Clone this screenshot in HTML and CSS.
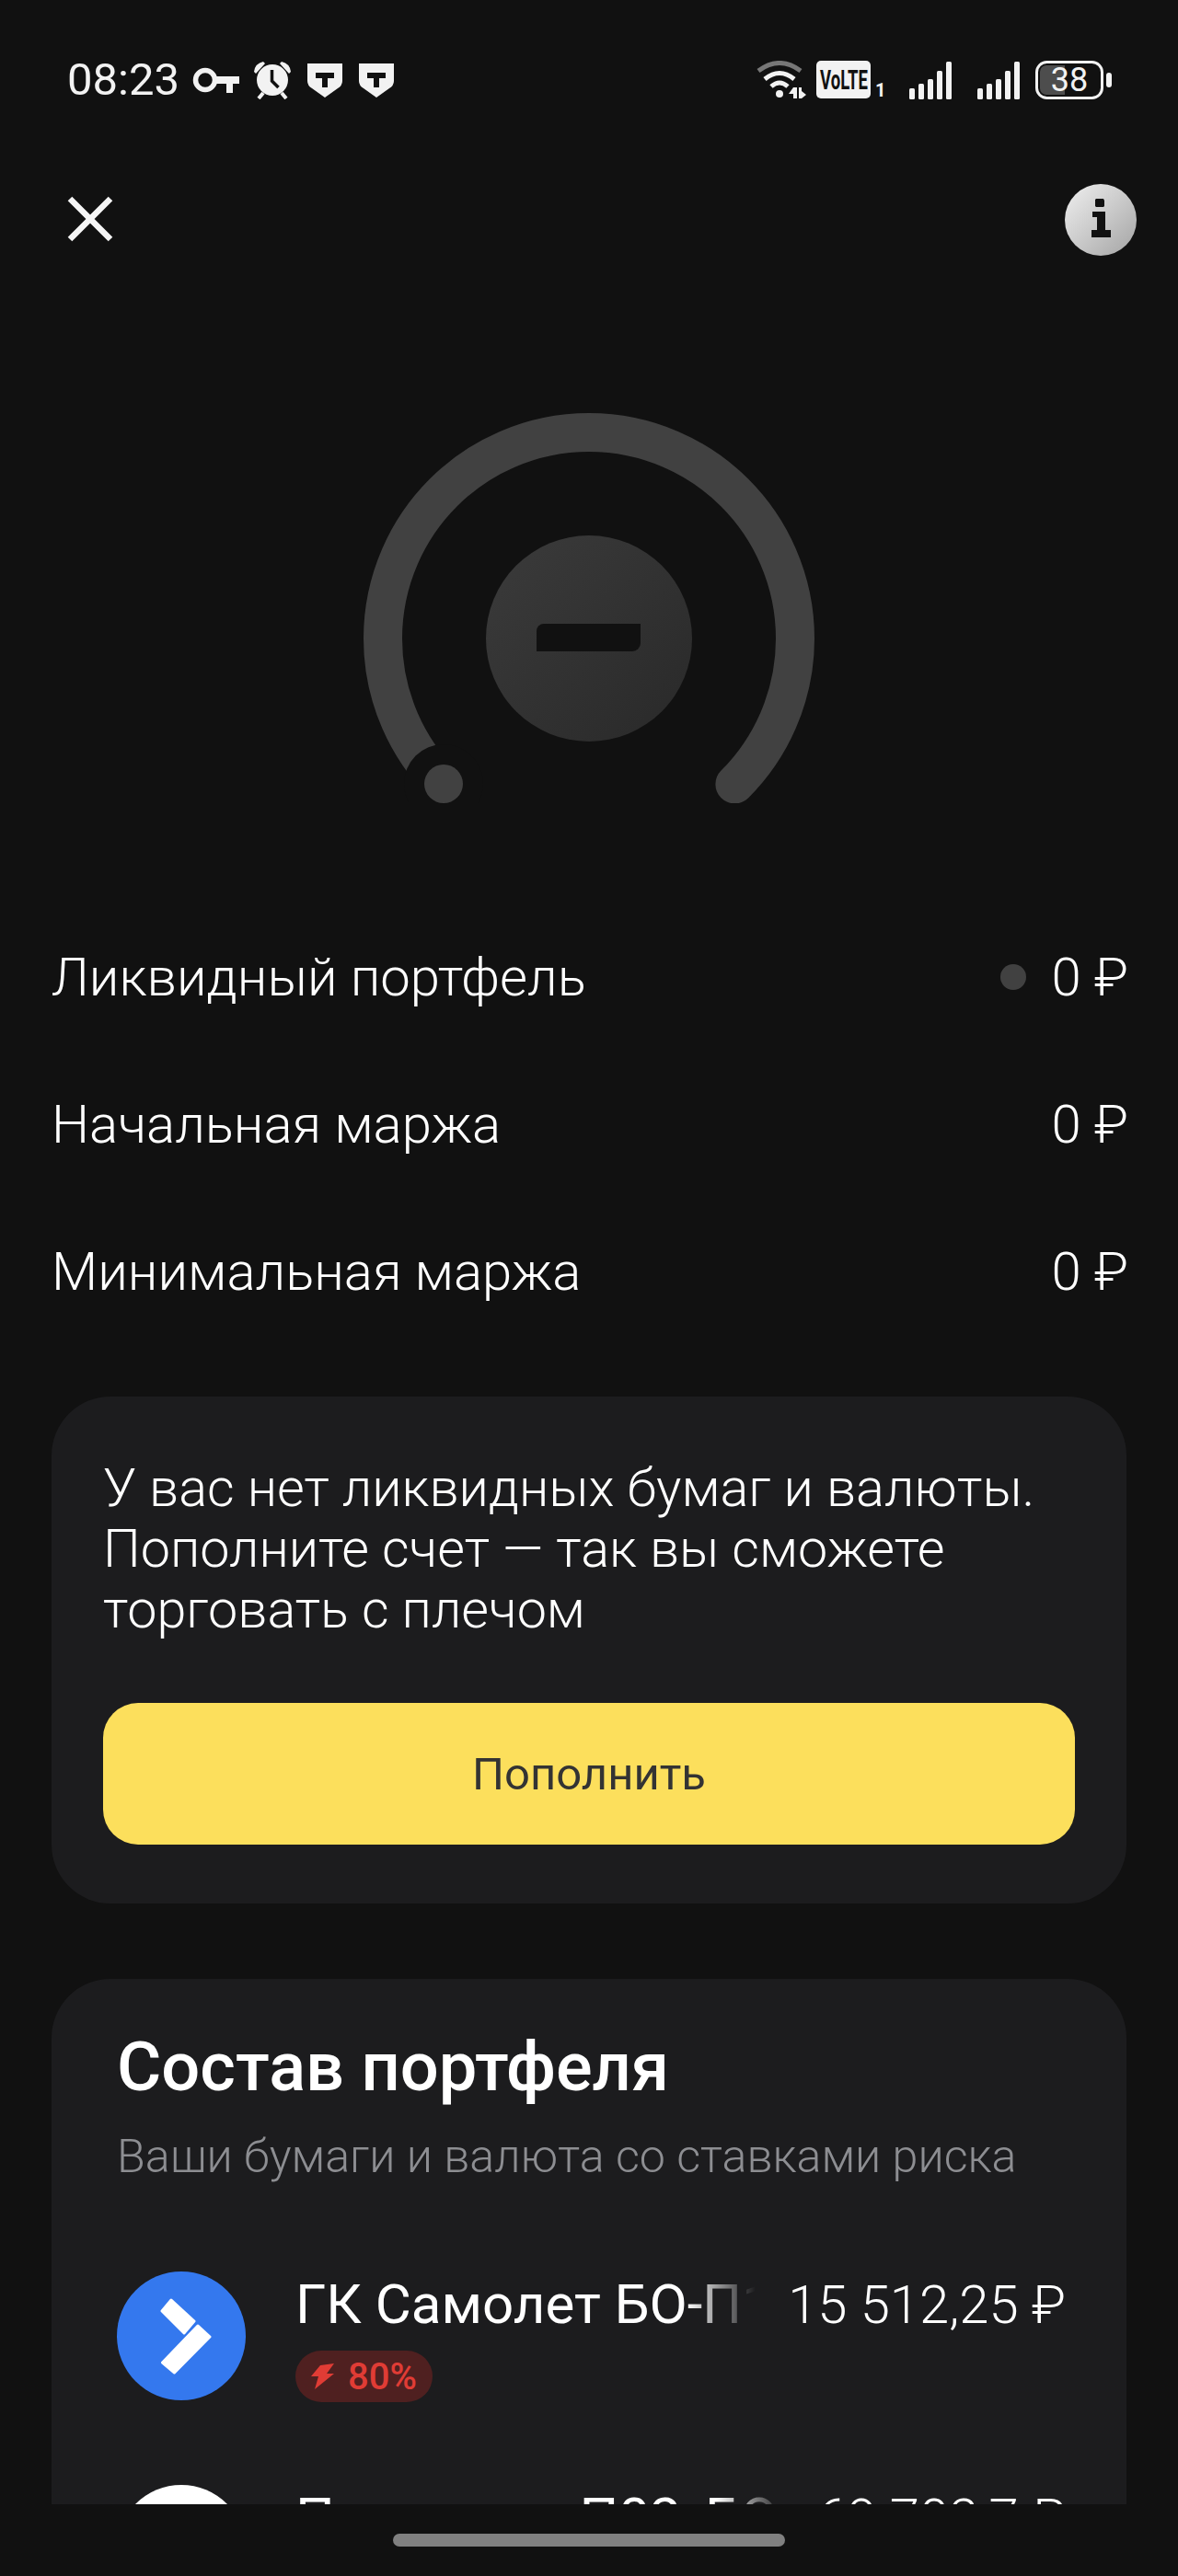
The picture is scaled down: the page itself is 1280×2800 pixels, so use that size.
FILE: index.html
```html
<!DOCTYPE html>
<html lang="ru">
<head>
    <meta charset="UTF-8">
    <meta name="viewport" content="width=device-width, initial-scale=1.0">
    <title>Маржинальная торговля</title>
    <link rel="stylesheet" href="styles.css">
</head>
<body>
    <div class="screen">
        <div class="content">
            <!-- Status bar -->
            <div class="status">
                <div class="status-left">
                    <span class="time">08:23</span>
                    <svg class="ic-key" width="52" height="28" viewBox="0 0 52 28"><circle cx="14" cy="14" r="10.5" fill="none" stroke="#f2f2f2" stroke-width="5.5"/><path d="M24 10h27v8H44v10h-7V18H24z" fill="#f2f2f2"/></svg>
                    <svg class="ic-alarm" width="42" height="42" viewBox="0 0 42 42"><circle cx="21" cy="21" r="17" fill="#f2f2f2"/><path d="M20.500 10v12l7 7" fill="none" stroke="#111" stroke-width="3.500"/><path d="M1 12Q2 3 11 1L13 3 3 14zM41 12Q40 3 31 1L29 3 39 14z" fill="#f2f2f2"/><path d="M6 41l5-6M36 41l-5-6" stroke="#f2f2f2" stroke-width="4"/></svg>
                    <svg class="ic-shield" width="38" height="38" viewBox="0 0 38 38"><path d="M0 1h38v19q0 5-5 8L19 38 5 28q-5-3-5-8z" fill="#f2f2f2"/><path d="M9 11h20v6h-7v10h-6V17H9z" fill="#111"/></svg>
                    <svg class="ic-shield" width="38" height="38" viewBox="0 0 38 38"><path d="M0 1h38v19q0 5-5 8L19 38 5 28q-5-3-5-8z" fill="#f2f2f2"/><path d="M9 11h20v6h-7v10h-6V17H9z" fill="#111"/></svg>
                </div>
                <div class="status-right">
                    <svg class="ic-wifi" width="54" height="42" viewBox="0 0 54 42"><path d="M2 11Q25-6 48 11" fill="none" stroke="#777" stroke-width="5"/><path d="M9 20Q25 7 41 20M16 28Q25 20 34 28" fill="none" stroke="#f2f2f2" stroke-width="5"/><circle cx="25" cy="36" r="4" fill="#f2f2f2"/><path d="M40 29v12h4V29zM40 29l-5 7h5zM46 29v12h3V29zM49 33l5 4-5 4z" fill="#f2f2f2"/></svg>
                    <svg class="ic-volte" width="76" height="42" viewBox="0 0 76 42"><rect x="0" y="0" width="59" height="41" rx="5" fill="#f2f2f2"/><text x="4" y="31" font-family="Roboto, sans-serif" font-weight="700" font-size="30" fill="#111" textLength="52" lengthAdjust="spacingAndGlyphs">VoLTE</text><text x="64" y="39" font-family="Roboto, sans-serif" font-weight="700" font-size="20" fill="#f2f2f2">1</text></svg>
                    <svg class="ic-signal" width="47" height="42" viewBox="0 0 47 42"><rect x="0" y="30" width="6" height="12" rx="1.500" fill="#f2f2f2"/><rect x="10" y="25" width="6" height="17" rx="1.500" fill="#f2f2f2"/><rect x="20" y="20" width="6" height="22" rx="1.500" fill="#f2f2f2"/><rect x="30" y="11" width="6" height="31" rx="1.500" fill="#f2f2f2"/><rect x="40" y="1" width="6" height="41" rx="1.500" fill="#f2f2f2"/></svg>
                    <svg class="ic-signal" width="47" height="42" viewBox="0 0 47 42"><rect x="0" y="30" width="6" height="12" rx="1.500" fill="#f2f2f2"/><rect x="10" y="25" width="6" height="17" rx="1.500" fill="#f2f2f2"/><rect x="20" y="20" width="6" height="22" rx="1.500" fill="#f2f2f2"/><rect x="30" y="11" width="6" height="31" rx="1.500" fill="#f2f2f2"/><rect x="40" y="1" width="6" height="41" rx="1.500" fill="#f2f2f2"/></svg>
                    <svg class="ic-battery" width="84" height="42" viewBox="0 0 84 42"><path d="M12 5h20v32H12a7 7 0 0 1-7-7V12a7 7 0 0 1 7-7z" fill="#4d4d4d"/><rect x="1.500" y="1.500" width="71" height="39" rx="11" fill="none" stroke="#f2f2f2" stroke-width="3"/><rect x="77" y="13" width="6" height="16" rx="3" fill="#f2f2f2"/><text x="37" y="33" text-anchor="middle" font-family="Roboto, sans-serif" font-size="36" fill="#f2f2f2">38</text></svg>
                </div>
            </div>

            <!-- Close and info buttons -->
            <div class="topbar">
                <svg width="50" height="50" viewBox="0 0 50 50"><path d="M3 3l44 44M47 3L3 47" stroke="#f5f5f5" stroke-width="6.500"/></svg>
                <svg width="78" height="78" viewBox="0 0 78 78">
                    <defs><linearGradient id="infoFill" x1="0" y1="0" x2="1" y2="1"><stop offset="0" stop-color="#f0f0f0"/><stop offset="1" stop-color="#a4a4a4"/></linearGradient></defs>
                    <circle cx="39" cy="39" r="39" fill="url(#infoFill)"/>
                    <path d="M34 16h8l1 2v6l-1 1h-8l-1-1v-7zM30 30h14v20h6v8H29v-8h6V36h-5z" fill="#111"/>
                </svg>
            </div>

            <!-- Gauge -->
            <svg class="gauge" width="490" height="424" viewBox="0 0 490 424">
                <defs><linearGradient id="coreFill" x1="0" y1="0" x2="1" y2="1"><stop offset="0" stop-color="#3b3b3b"/><stop offset="1" stop-color="#292929"/></linearGradient></defs>
                <path d="M86.600 403.400A224 224 0 1 1 403.400 403.400" fill="none" stroke="#414141" stroke-width="42" stroke-linecap="round"/>
                <circle cx="87" cy="403" r="43" fill="#111"/>
                <circle cx="87" cy="403" r="21" fill="#414141"/>
                <circle cx="245" cy="245" r="112" fill="url(#coreFill)"/>
                <path d="M196 229h105a8 8 0 0 1 0 0v21a9 9 0 0 1-9 9H188V237a8 8 0 0 1 8-8z" fill="#111"/>
            </svg>

            <!-- Margin figures -->
            <div class="rows">
                <div class="row">
                    <span>Ликвидный портфель</span>
                    <span class="row-value"><i class="dot"></i>0 ₽</span>
                </div>
                <div class="row">
                    <span>Начальная маржа</span>
                    <span class="row-value">0 ₽</span>
                </div>
                <div class="row">
                    <span>Минимальная маржа</span>
                    <span class="row-value">0 ₽</span>
                </div>
            </div>

            <div class="card notice">
                <p class="notice-text">У вас нет ликвидных бумаг и валюты. Пополните счет — так вы сможете торговать с плечом</p>
                <button class="button">Пополнить</button>
            </div>

            <div class="card portfolio">
                <h2>Состав портфеля</h2>
                <p class="sub">Ваши бумаги и валюта со ставками риска</p>

                <div class="item">
                    <svg class="logo" width="140" height="140" viewBox="0 0 140 140">
                        <circle cx="70" cy="70" r="70" fill="#3478ee"/>
                        <path d="M59 31L49 43 73 67 84 54zM88 59L101 71 62.500 110 49.500 99z" fill="#fff" stroke="#fff" stroke-width="3" stroke-linejoin="round"/>
                    </svg>
                    <div class="item-main">
                        <div class="item-name">ГК Самолет БО-П13</div>
                        <span class="badge">
                            <svg width="26" height="28" viewBox="0 0 26 28"><path d="M10 2L25 0 17 11h8L4 28l4-14H0z" fill="#e03c35"/></svg>
                            80%
                        </span>
                    </div>
                    <div class="item-sum">15 512,25 ₽</div>
                </div>

                <div class="item">
                    <svg class="logo" width="140" height="140" viewBox="0 0 140 140"><circle cx="70" cy="70" r="70" fill="#fff"/></svg>
                    <div class="item-main">
                        <div class="item-name">Пионер ао П02, БО-04</div>
                    </div>
                    <div class="item-sum">69 702,7 ₽</div>
                </div>
            </div>
        </div>

        <div class="navbar"><div class="handle"></div></div>
    </div>
</body>
</html>
```

FILE: styles.css
```css
* {
    box-sizing: border-box;
}

body {
    margin: 0;
    background-color: #111111;
    color: #fff;
    font-family: 'Roboto', 'Liberation Sans', sans-serif;
}

.screen {
    width: 1280px;
    height: 2800px;
    display: flex;
    flex-direction: column;
    overflow: hidden;
}

.content {
    height: 2722px;
    overflow: hidden;
    flex: none;
}

/* Status bar */
.status {
    height: 174px;
    padding: 0 71px 0 73px;
    display: flex;
    justify-content: space-between;
    align-items: center;
    color: #f2f2f2;
}

.status-left,
.status-right {
    display: flex;
    align-items: center;
}

.time {
    font-size: 49px;
    font-weight: 400;
    line-height: 50px;
    margin-right: 14px;
}

.ic-alarm {
    margin-left: 14px;
    margin-right: 17px;
}

.ic-shield {
    margin-right: 18px;
}

.ic-shield:last-child {
    margin-right: 0;
}

.ic-wifi {
    margin-right: 11px;
}

.ic-volte {
    margin-right: 25px;
}

.ic-signal {
    margin-right: 27px;
}

.ic-signal + .ic-battery {
    margin-left: -11px;
}

/* Top buttons */
.topbar {
    padding: 26px 45px 0 73px;
    height: 136px;
    display: flex;
    justify-content: space-between;
    align-items: flex-start;
}

.topbar svg:first-child {
    margin-top: 13px;
}

.gauge {
    display: block;
    margin: 139px auto 0;
}

/* Margin figures */
.rows {
    margin-top: 109px;
    padding: 0 54px 0 56px;
}

.row {
    height: 160px;
    display: flex;
    justify-content: space-between;
    align-items: center;
    font-size: 58px;
    font-weight: 300;
}

.row-value {
    display: flex;
    align-items: center;
}

.dot {
    width: 28px;
    height: 28px;
    border-radius: 50%;
    background: #414141;
    margin-right: 27px;
}

/* Cards */
.card {
    margin: 0 56px;
    background: #1c1c1e;
    border-radius: 64px;
}

.notice {
    margin-top: 56px;
    height: 551px;
    padding: 67px 56px 0;
}

.notice-text {
    margin: 0;
    font-size: 57.5px;
    font-weight: 300;
    line-height: 66px;
}

.button {
    display: block;
    width: 100%;
    height: 154px;
    margin-top: 68px;
    background-color: #fcdf5c;
    color: #333;
    border: none;
    border-radius: 38px;
    font-family: inherit;
    font-size: 49px;
    font-weight: 400;
}

.portfolio {
    margin-top: 82px;
    height: 720px;
    padding: 54px 66px 0 71px;
}

.portfolio h2 {
    margin: 0;
    font-size: 74px;
    font-weight: 500;
    line-height: 84px;
}

.sub {
    margin: 27px 0 0;
    font-size: 50.2px;
    font-weight: 300;
    line-height: 56px;
    color: #8d8e92;
}

.item {
    display: flex;
    align-items: flex-start;
    margin-top: 97px;
}

.item + .item {
    margin-top: 90px;
}

.logo {
    flex: none;
    margin-right: 54px;
}

.item-main {
    flex: 1;
    min-width: 0;
    margin-right: 30px;
}

.item-name {
    margin-top: 1px;
    font-size: 60px;
    font-weight: 400;
    line-height: 70px;
    white-space: nowrap;
    overflow: hidden;
    -webkit-mask-image: linear-gradient(to right, #000 calc(100% - 80px), transparent calc(100% - 5px));
    mask-image: linear-gradient(to right, #000 calc(100% - 80px), transparent calc(100% - 5px));
}

.item-sum {
    flex: none;
    margin-top: 1px;
    font-size: 58px;
    font-weight: 300;
    line-height: 70px;
}

.badge {
    display: inline-flex;
    align-items: center;
    gap: 14px;
    height: 56px;
    padding: 0 17px;
    margin-top: 15px;
    border-radius: 28px;
    background: #4f2020;
    color: #e03c35;
    font-size: 40px;
    font-weight: 500;
}

/* Bottom nav */
.navbar {
    flex: 1;
    background: #111111;
    padding-top: 32px;
}

.handle {
    width: 426px;
    height: 14px;
    margin: 0 auto;
    border-radius: 7px;
    background: #808080;
}
```
